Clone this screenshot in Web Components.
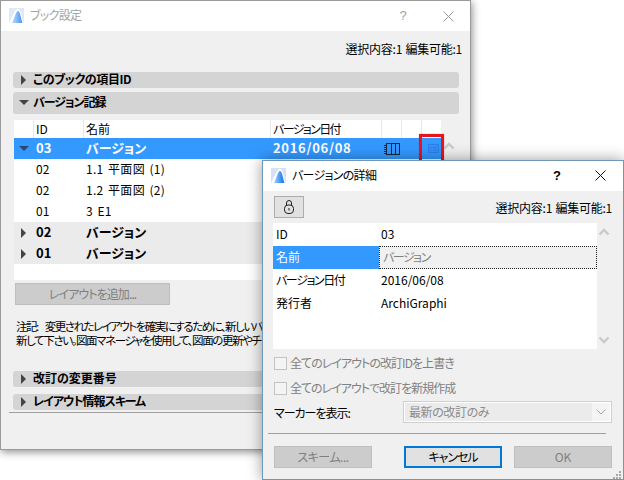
<!DOCTYPE html>
<html lang="ja">
<head>
<meta charset="utf-8">
<title>ブック設定</title>
<style>
  html, body { margin: 0; height: 100%; background: #fff; overflow: hidden; }
  body {
    position: relative;
    width: 624px;
    height: 480px;
    font: 12px/14px "Noto Sans CJK JP", "Liberation Sans", sans-serif;
    font-feature-settings: "palt";
    color: #000;
  }
  #book { left: 0; top: 0; width: 471px; height: 450px; z-index: 1; }
  #details { left: 262px; top: 160px; width: 362px; height: 320px; z-index: 3; }
  #mark { left: 419px; top: 134px; z-index: 2; }
</style>
</head>
<body>

<ac-window id="book" heading="ブック設定" inactive>
  <ac-status style="height:36px;margin:0 -3px 5px 0">選択内容:1 編集可能:1</ac-status>
  <ac-section style="height:16px;margin-bottom:4px;letter-spacing:-.4px">このブックの項目ID</ac-section>
  <ac-section style="height:22px;margin-bottom:6px;letter-spacing:-1px" open>バージョン記録</ac-section>

  <ac-version-table style="margin-left:1px;width:427px">
    <ac-version-row kind="selected" num="03" name="バージョン" date="2016/06/08"></ac-version-row>
    <ac-version-row num="02" name="1.1 平面図 (1)"></ac-version-row>
    <ac-version-row num="02" name="1.2 平面図 (2)"></ac-version-row>
    <ac-version-row num="01" name="3 E1"></ac-version-row>
    <ac-version-row kind="group" num="02" name="バージョン"></ac-version-row>
    <ac-version-row kind="group" num="01" name="バージョン"></ac-version-row>
  </ac-version-table>

  <ac-button disabled style="width:155px;margin:3px 0 0 2px;letter-spacing:-.9px">レイアウトを追加...</ac-button>

  <ac-note style="margin:14px -20px 0 3px">
    <div style="font-size:11.5px;letter-spacing:-1.5px;word-spacing:6px">注記: 変更されたレイアウトを確実にするために、新しいバ</div>
    <div style="font-size:11.5px;letter-spacing:-1.4px">新して下さい。図面マネージャを使用して、図面の更新やチ</div>
  </ac-note>

  <ac-section style="height:16px;margin:24px 0 7px">改訂の変更番号</ac-section>
  <ac-section style="height:16px;letter-spacing:-1px">レイアウト情報スキーム</ac-section>
  <ac-rule style="margin:2px -3px 0 -4px"></ac-rule>
</ac-window>

<ac-mark id="mark"></ac-mark>

<ac-window id="details" heading="バージョンの詳細">
  <div style="display:flex;justify-content:space-between;height:32px">
    <ac-button style="width:30px;margin-top:5px" icon="lock"></ac-button>
    <ac-status style="height:34px">選択内容:1 編集可能:1</ac-status>
  </div>

  <ac-detail-list style="margin-left:-1px">
    <ac-detail-row label="ID" value="03"></ac-detail-row>
    <ac-detail-row label="名前" value="バージョン" focused></ac-detail-row>
    <ac-detail-row label="バージョン日付" value="2016/06/08" tight></ac-detail-row>
    <ac-detail-row label="発行者" value="ArchiGraphi"></ac-detail-row>
  </ac-detail-list>

  <ac-check style="margin-top:2px;letter-spacing:-.95px">全てのレイアウトの改訂IDを上書き</ac-check>
  <ac-check style="letter-spacing:-1px">全てのレイアウトで改訂を新規作成</ac-check>
  <ac-select label="マーカーを表示:" value="最新の改訂のみ"></ac-select>
  <ac-rule style="margin:10px 6px 0 -6px"></ac-rule>

  <div style="display:flex;margin-top:12px">
    <ac-button disabled style="width:98px;letter-spacing:-.5px">スキーム...</ac-button>
    <ac-button default style="width:98px;margin-left:32px;letter-spacing:-1px">キャンセル</ac-button>
    <ac-button disabled style="width:98px;margin-left:12px">OK</ac-button>
  </div>
  <ac-grip></ac-grip>
</ac-window>

<script>
(function() {

  /**
   * Base class: stamps a style and markup string into an open shadow root.
   */
  class AcElement extends HTMLElement {
    constructor() {
      super();
      this.attachShadow({mode: 'open'});
    }

    connectedCallback() {
      this.shadowRoot.innerHTML = this.render();
    }

    attr(name) {
      return this.getAttribute(name) || '';
    }
  }

  const logo = `<svg class="logo" width="15" height="15" viewBox="0 0 15 15">
    <defs>
      <linearGradient id="lg" x1="0" y1="0" x2="1" y2="0">
        <stop offset="0" stop-color="#a6d0fb"/>
        <stop offset=".55" stop-color="#4b9bf5"/>
        <stop offset="1" stop-color="#1a6fe6"/>
      </linearGradient>
    </defs>
    <rect width="15" height="15" fill="#d3e2f5"/>
    <path d="M0 15C3 10 5.5 .8 9 .8 11.5 .8 13 9 14.6 15Z" fill="#fff"/>
    <path d="M3 15C5.5 10 7 3 9 3 11 3 12 10 13.4 15Z" fill="url(#lg)"/>
  </svg>`;

  /**
   * A dialog window with a white title bar.
   */
  class AcWindow extends AcElement {
    render() {
      return `<style>
        :host {
          position: absolute;
          display: flex;
          flex-direction: column;
          box-sizing: border-box;
          border: 1px solid #6f97b8;
          background: #f0f0f0;
          box-shadow: 0 0 14px rgba(0, 0, 0, .4);
        }
        :host([inactive]) { border-color: #9a9a9a; box-shadow: 1px 2px 8px rgba(0, 0, 0, .45); }
        header {
          display: flex;
          align-items: center;
          height: 30px;
          flex: none;
          background: #fff;
          padding-left: 8px;
        }
        .logo { display: block; margin-bottom: 2px; }
        .name { margin-left: 6px; padding-bottom: 2px; flex: 1; letter-spacing: -.7px; }
        :host([inactive]) .name, :host([inactive]) .q { color: #a3a3a3; }
        :host([inactive]) .logo { opacity: .75; }
        .q { width: 14px; text-align: center; padding-bottom: 2px; font: 700 13px "Liberation Sans", sans-serif; }
        :host([inactive]) .q { font-weight: 400; }
        .x { margin: 0 17px 1px 31px; display: block; stroke: #111; }
        :host([inactive]) .x { stroke: #9a9a9a; margin: 0 16px 0 33px; }
        main { flex: 1; padding: 0 11px; min-height: 0; position: relative; }
        :host([inactive]) main { padding-left: 12px; }
      </style>
      <header>
        ${logo}
        <span class="name">${this.attr('heading')}</span>
        <span class="q">?</span>
        <svg class="x" width="11" height="11" viewBox="0 0 11 11" fill="none"><path d="M.5 .5 10.5 10.5M10.5 .5 .5 10.5"/></svg>
      </header>
      <main><slot></slot></main>`;
    }
  }

  /**
   * The "selected / editable" counter, right aligned.
   */
  class AcStatus extends AcElement {
    render() {
      return `<style>
        :host { display: flex; align-items: center; justify-content: flex-end; white-space: nowrap; word-spacing: 1px; letter-spacing: -.25px; }
      </style><slot></slot>`;
    }
  }

  /**
   * A collapsible section bar.
   */
  class AcSection extends AcElement {
    render() {
      const arrow = this.hasAttribute('open')
        ? '<path d="M0 2H10L5 7Z"/>'
        : '<path d="M2 0 7 5 2 10Z"/>';
      return `<style>
        :host {
          display: flex;
          align-items: center;
          background: #d4d4d4;
          border-radius: 3px;
          font-weight: 700;
        }
        svg { margin-left: 6px; width: 10px; height: 10px; fill: #444; flex: none; }
        span { margin-left: 4px; padding-bottom: 2px; }
      </style>
      <svg viewBox="0 0 10 10">${arrow}</svg><span><slot></slot></span>`;
    }
  }

  /**
   * The version table: header columns and slotted rows.
   */
  class AcVersionTable extends AcElement {
    render() {
      return `<style>
        :host {
          display: block;
          background: #fff;
          padding-bottom: 16px;
          --cols: 19px 50px 187px 111px 20px 20px 20px;
          position: relative;
        }
        .head { display: grid; grid-template-columns: var(--cols); height: 18px; }
        .head div { border-left: 1px solid #e6e6e6; padding-left: 2px; line-height: 18px; white-space: nowrap; }
        .head div:first-child { border: 0; }
        .head .date { letter-spacing: -1.6px; }
        .up { position: absolute; left: 429px; top: 22px; }
      </style>
      <div class="head">
        <div></div><div>ID</div><div>名前</div><div class="date">バージョン日付</div><div></div><div></div><div></div>
      </div>
      <slot></slot>
      <svg class="up" width="12" height="8" viewBox="0 0 12 8" fill="none" stroke="#c9c9c9" stroke-width="2.4"><path d="M1.5 6.5 6 2 10.5 6.5"/></svg>`;
    }
  }

  /**
   * One line of the version table.
   */
  class AcVersionRow extends AcElement {
    render() {
      const kind = this.attr('kind');
      const arrow = kind === 'selected' ? '<path d="M0 2H10L5 7Z" fill="#2a4a70"/>'
        : kind === 'group' ? '<path d="M2 0 7 5 2 10Z" fill="#444"/>' : '';
      const book = kind === 'selected' ? `
        <svg width="16" height="12" viewBox="0 0 16 12" fill="none" stroke="#14263c">
          <rect x="2.5" y=".5" width="13" height="11"/><path d="M7.5 .5V11.5M11.5 .5V11.5M0 2.5H2.5M0 4.5H2.5M0 6.5H2.5M0 8.5H2.5M0 10.5H2.5"/>
        </svg>` : '';
      const card = kind === 'selected' ? `
        <svg width="11" height="9" viewBox="0 0 11 9" stroke="#2a7fec">
          <rect x=".5" y=".5" width="10" height="8" fill="#3a8ef5"/><path d="M2 3.5H3.5M5 3.5H9M2 6H3.5M5 6H9" fill="none"/>
        </svg>` : '';
      return `<style>
        :host {
          display: grid;
          grid-template-columns: var(--cols);
          height: 21px;
          align-items: center;
          white-space: nowrap;
        }
        :host([kind=selected]) { background: #3399ff; color: #fff; font-weight: 700; font-size: 13px; }
        :host([kind=group]) { background: #ebebeb; font-weight: 700; font-size: 13px; }
        .tri { padding-left: 5px; display: flex; }
        .cell { padding: 0 0 2px 3px; }
        .name { padding: 0 0 2px 3px; word-spacing: 1.5px; letter-spacing: .3px; }
        :host([kind]) .name { letter-spacing: 0; }
        .date { padding: 0 0 2px 3px; letter-spacing: .7px; }
        .ico { display: flex; align-items: center; padding-left: 3px; }
        .card { display: flex; justify-content: center; padding: 0 0 1px 5px; }
      </style>
      <div class="tri"><svg width="10" height="10" viewBox="0 0 10 10">${arrow}</svg></div>
      <div class="cell">${this.attr('num')}</div>
      <div class="name">${this.attr('name')}</div>
      <div class="date">${this.attr('date')}</div>
      <div class="ico">${book}</div>
      <div></div>
      <div class="card">${card}</div>`;
    }
  }

  /**
   * A push button: plain, disabled, default or icon only.
   */
  class AcButton extends AcElement {
    render() {
      const lock = this.attr('icon') === 'lock' ? `
        <svg width="10" height="14" viewBox="0 0 10 14" fill="none" stroke="#222">
          <path d="M2.5 5.5V3a2.5 2.5 0 0 1 5 0V5.5"/><rect x=".5" y="5" width="9" height="8.5" rx="3.5"/><path d="M5 8V10.5"/>
        </svg>` : '';
      return `<style>
        :host {
          display: flex;
          align-items: center;
          justify-content: center;
          box-sizing: border-box;
          height: 22px;
          background: #e1e1e1;
          border: 1px solid #adadad;
          white-space: nowrap;
        }
        :host([disabled]) { background: #cccccc; border-color: #bfbfbf; color: #7f7f7f; }
        :host([default]) { border: 2px solid #0078d7; }
        span { padding-bottom: 1px; }
      </style>${lock}<span><slot></slot></span>`;
    }
  }

  /**
   * The note text below the table.
   */
  class AcNote extends AcElement {
    render() {
      return `<style>
        :host { display: block; white-space: nowrap; height: 28px; }
      </style><slot></slot>`;
    }
  }

  /**
   * A horizontal separator.
   */
  class AcRule extends AcElement {
    render() {
      return `<style>
        :host { display: block; height: 1px; background: #a0a0a0; }
      </style>`;
    }
  }

  /**
   * The red box the screenshot was annotated with.
   */
  class AcMark extends AcElement {
    render() {
      return `<style>
        :host {
          position: absolute;
          display: block;
          box-sizing: border-box;
          width: 25px;
          height: 29px;
          border: 3px solid #e8141c;
          box-shadow: 0 0 1px rgba(232, 20, 28, .5);
        }
      </style>`;
    }
  }

  /**
   * The list of properties in the details window.
   */
  class AcDetailList extends AcElement {
    render() {
      return `<style>
        :host { display: block; position: relative; height: 126px; }
        .list { background: #fff; width: 324px; height: 126px; }
        svg { position: absolute; left: 325px; }
      </style>
      <div class="list"><slot></slot></div>
      <svg style="top:5px" width="12" height="8" viewBox="0 0 12 8" fill="none" stroke="#c9c9c9" stroke-width="2.4"><path d="M1.5 6.5 6 2 10.5 6.5"/></svg>
      <svg style="top:113px" width="12" height="8" viewBox="0 0 12 8" fill="none" stroke="#c9c9c9" stroke-width="2.4"><path d="M1.5 1.5 6 6 10.5 1.5"/></svg>`;
    }
  }

  /**
   * One property line: a label and a value.
   */
  class AcDetailRow extends AcElement {
    render() {
      return `<style>
        :host { display: flex; height: 23px; align-items: center; white-space: nowrap; }
        .k { box-sizing: border-box; width: 106px; padding: 0 0 2px 3px; height: 100%; display: flex; align-items: center; }
        :host([tight]) .k { letter-spacing: -1.4px; }
        .v { flex: 1; box-sizing: border-box; padding: 0 0 2px 2px; height: 100%; display: flex; align-items: center; }
        :host([focused]) .k { background: #3399ff; color: #fff; }
        :host([focused]) .v {
          background: #f0f0f0;
          color: #808080;
          border: 1px dotted #222;
          padding-left: 3px;
          letter-spacing: -1.5px;
        }
      </style>
      <div class="k">${this.attr('label')}</div>
      <div class="v">${this.attr('value')}</div>`;
    }
  }

  /**
   * A disabled checkbox with its label.
   */
  class AcCheck extends AcElement {
    render() {
      return `<style>
        :host { display: flex; align-items: center; height: 25px; color: #808080; white-space: nowrap; }
        i { box-sizing: border-box; width: 13px; height: 13px; border: 1px solid #c4c4c4; background: #f4f4f4; margin-right: 3px; flex: none; }
        span { padding-bottom: 2px; }
      </style><i></i><span><slot></slot></span>`;
    }
  }

  /**
   * A labelled, disabled drop-down.
   */
  class AcSelect extends AcElement {
    render() {
      return `<style>
        :host { display: flex; align-items: center; height: 22px; white-space: nowrap; }
        .l { width: 129px; flex: none; letter-spacing: -1px; padding-top: 1px; }
        .box {
          flex: 1;
          display: flex;
          align-items: stretch;
          box-sizing: border-box;
          height: 22px;
          border: 1px solid #cfcfcf;
          background: #fff;
          padding: 1px;
        }
        .v { flex: 1; background: #ebebeb; color: #8a8a8a; padding-left: 4px; line-height: 18px; letter-spacing: -.4px; }
        .a { width: 18px; display: flex; align-items: center; justify-content: center; background: #f4f4f4; }
      </style>
      <div class="l">${this.attr('label')}</div>
      <div class="box">
        <div class="v">${this.attr('value')}</div>
        <div class="a"><svg width="10" height="6" viewBox="0 0 10 6" fill="none" stroke="#a8a8a8"><path d="M.5 .5 5 5 9.5 .5"/></svg></div>
      </div>`;
    }
  }

  /**
   * The resize grip in the window corner.
   */
  class AcGrip extends AcElement {
    render() {
      return `<style>
        :host { position: absolute; right: 1px; bottom: 1px; display: block; width: 10px; height: 10px; }
      </style>
      <svg width="10" height="10" viewBox="0 0 10 10" fill="#a8a8a8">
        <rect x="7" y="1" width="2" height="2"/><rect x="4" y="4" width="2" height="2"/><rect x="7" y="4" width="2" height="2"/>
        <rect x="1" y="7" width="2" height="2"/><rect x="4" y="7" width="2" height="2"/><rect x="7" y="7" width="2" height="2"/>
      </svg>`;
    }
  }

  const elements = {
    'ac-window': AcWindow,
    'ac-status': AcStatus,
    'ac-section': AcSection,
    'ac-version-table': AcVersionTable,
    'ac-version-row': AcVersionRow,
    'ac-button': AcButton,
    'ac-note': AcNote,
    'ac-rule': AcRule,
    'ac-mark': AcMark,
    'ac-detail-list': AcDetailList,
    'ac-detail-row': AcDetailRow,
    'ac-check': AcCheck,
    'ac-select': AcSelect,
    'ac-grip': AcGrip
  };

  Object.keys(elements).forEach((tag) => customElements.define(tag, elements[tag]));
})();
</script>
</body>
</html>
